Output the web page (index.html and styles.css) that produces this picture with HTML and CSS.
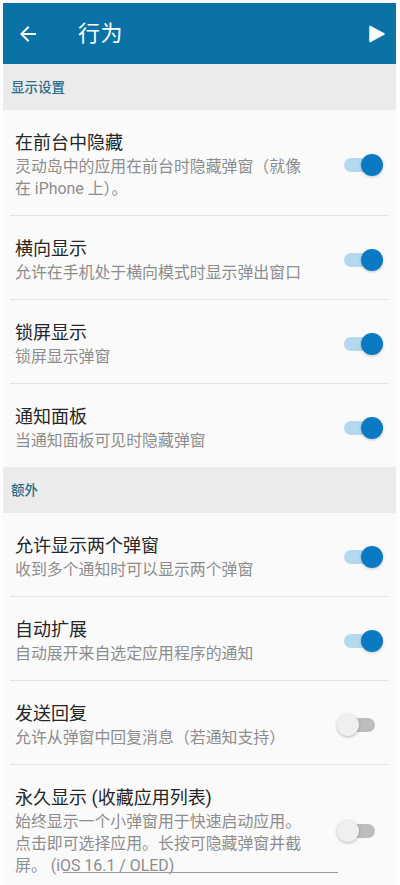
FILE: index.html
```html
<!DOCTYPE html>
<html lang="zh-CN">
<head>
<meta charset="utf-8">
<link rel="stylesheet" href="styles.css">
</head>
<body>
<div class="app">
  <header class="topbar">
    <svg class="back" viewBox="0 0 24 24" width="24" height="24"><path d="M20 11H7.83l5.59-5.59L12 4l-8 8 8 8 1.41-1.41L7.83 13H20v-2z" fill="#fff"/></svg>
    <h1 class="title">行为</h1>
    <svg class="play" viewBox="0 0 16 18" width="16" height="18"><path d="M1 1.5 L15 9 L1 16.5 Z" fill="#fff" stroke="#fff" stroke-width="1.5" stroke-linejoin="round"/></svg>
  </header>

  <div class="section">显示设置</div>
  <div class="item">
    <div class="text">
      <div class="name">在前台中隐藏</div>
      <div class="desc">灵动岛中的应用在前台时隐藏弹窗（就像在 iPhone 上）。</div>
    </div>
    <div class="switch on"><span class="track"></span><span class="knob"></span></div>
  </div>
  <div class="item">
    <div class="text">
      <div class="name">横向显示</div>
      <div class="desc">允许在手机处于横向模式时显示弹出窗口</div>
    </div>
    <div class="switch on"><span class="track"></span><span class="knob"></span></div>
  </div>
  <div class="item">
    <div class="text">
      <div class="name">锁屏显示</div>
      <div class="desc">锁屏显示弹窗</div>
    </div>
    <div class="switch on"><span class="track"></span><span class="knob"></span></div>
  </div>
  <div class="item last">
    <div class="text">
      <div class="name">通知面板</div>
      <div class="desc">当通知面板可见时隐藏弹窗</div>
    </div>
    <div class="switch on"><span class="track"></span><span class="knob"></span></div>
  </div>

  <div class="section">额外</div>
  <div class="item">
    <div class="text">
      <div class="name">允许显示两个弹窗</div>
      <div class="desc">收到多个通知时可以显示两个弹窗</div>
    </div>
    <div class="switch on"><span class="track"></span><span class="knob"></span></div>
  </div>
  <div class="item">
    <div class="text">
      <div class="name">自动扩展</div>
      <div class="desc">自动展开来自选定应用程序的通知</div>
    </div>
    <div class="switch on"><span class="track"></span><span class="knob"></span></div>
  </div>
  <div class="item">
    <div class="text">
      <div class="name">发送回复</div>
      <div class="desc">允许从弹窗中回复消息（若通知支持）</div>
    </div>
    <div class="switch off"><span class="track"></span><span class="knob"></span></div>
  </div>
  <div class="item last">
    <div class="text">
      <div class="name">永久显示 (收藏应用列表)</div>
      <div class="desc">始终显示一个小弹窗用于快速启动应用。点击即可选择应用。长按可隐藏弹窗并截屏。 (iOS 16.1 / OLED)</div>
    </div>
    <div class="switch off"><span class="track"></span><span class="knob"></span></div>
  </div>
  <div class="indicator"></div>
</div>
</body>
</html>
```

FILE: styles.css
```css
* { box-sizing: border-box; }
html, body {
  margin: 0;
  padding: 0;
  background: #fdfdfd;
  height: 885px;
  overflow: hidden;
}
body {
  font-family: Roboto, "Noto Sans CJK SC", sans-serif;
}
.app {
  margin: 3px 4px 0 3px;
  background: #fafafa;
  height: 882px;
  overflow: hidden;
  position: relative;
}
.topbar {
  height: 61px;
  background: #0b72a6;
  display: flex;
  align-items: center;
  padding: 0 11px 0 13px;
}
.back { flex: none; }
.title {
  margin: 0 0 0 38px;
  font-size: 22px;
  font-weight: 400;
  color: #fff;
  flex: 1;
  line-height: 1;
  letter-spacing: 0.5px;
}
.play { flex: none; }
.section {
  height: 46px;
  background: #ebebeb;
  color: #2d6d8e;
  font-size: 13.5px;
  font-weight: 500;
  padding: 13px 0 0 8px;
  line-height: 20px;
}
.item {
  display: flex;
  align-items: center;
  margin: 0 7px;
  padding: 20px 0 15px 5px;
  border-bottom: 1px solid #e3e3e3;
}
.item.last { border-bottom: none; }
.text {
  flex: none;
  width: 292px;
}
.name {
  font-size: 18px;
  line-height: 26px;
  color: #262626;
  font-weight: 400;
}
.desc {
  font-size: 15.9px;
  line-height: 22px;
  color: #8d8d8d;
}
.switch {
  margin-left: auto;
  margin-right: 6px;
  width: 46px;
  height: 24px;
  position: relative;
  flex: none;
}
.track {
  position: absolute;
  left: 7px;
  top: 5px;
  width: 33px;
  height: 14px;
  border-radius: 7px;
  background: #b4d9ee;
}
.knob {
  position: absolute;
  top: 1px;
  width: 22px;
  height: 22px;
  border-radius: 50%;
  background: #0a7bc2;
  box-shadow: 0 1px 3px rgba(0,0,0,0.22);
}
.switch.on .knob { right: 0; }
.switch.off .track { background: #bdbdbd; left: 5px; }
.switch.off .knob { left: 0; background: #efefef; box-shadow: 0 1px 3px rgba(0,0,0,0.28); }
.indicator {
  position: absolute;
  left: 60px;
  width: 275px;
  top: 869px;
  height: 1px;
  background: #9a9a9a;
}
```
